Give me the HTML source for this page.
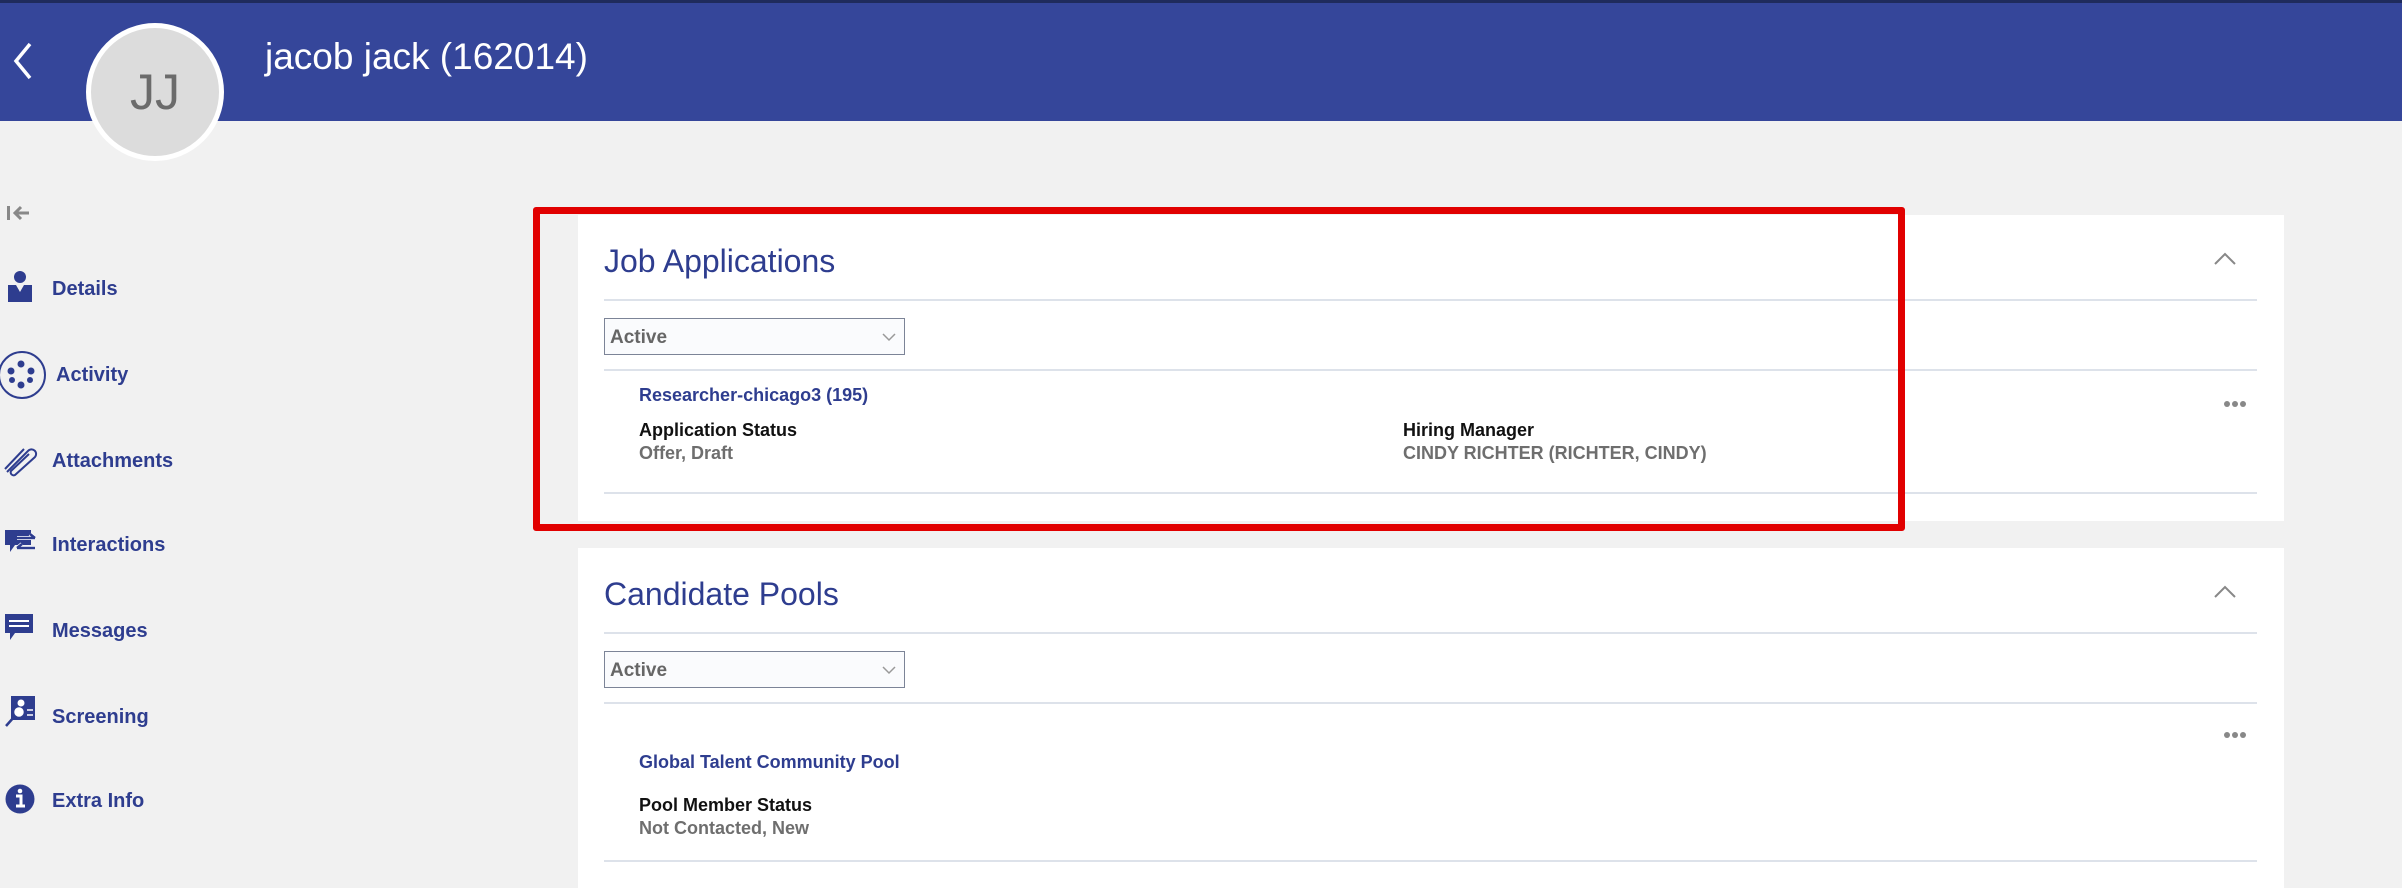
<!DOCTYPE html>
<html><head><meta charset="utf-8">
<style>
*{margin:0;padding:0;box-sizing:border-box}
body{width:2402px;height:882px;background:#f1f1f1;font-family:"Liberation Sans",sans-serif;position:relative;overflow:hidden}
.hdr{position:absolute;left:0;top:0;width:2402px;height:121px;background:#35469a;border-top:3px solid #1f2b5c}
.av{position:absolute;left:86px;top:23px;width:138px;height:138px;border-radius:50%;background:#dcdcdc;border:5px solid #fff;color:#6b6b6b;font-size:50px;text-align:center;line-height:128px}
.ttl{position:absolute;left:265px;top:36px;color:#fff;font-size:37px}
.nav{position:absolute;left:52px;color:#2e3d8f;font-weight:bold;font-size:20px}
.ic{position:absolute}
.card{position:absolute;left:578px;width:1706px;background:#fff}
.h{position:absolute;left:26px;color:#2e3d8f;font-size:32px}
.dv{position:absolute;left:26px;width:1653px;height:2px;background:#dde2ea}
.sel{position:absolute;left:26px;width:301px;height:37px;border:1px solid #7c8497;background:#fafbfd;font-size:19px;color:#666;font-weight:bold;padding:8px 5px}
.lnk{position:absolute;left:61px;color:#2e3d8f;font-weight:bold;font-size:18px}
.lb{position:absolute;color:#111;font-size:18px;font-weight:bold}
.vl{position:absolute;color:#6e6e6e;font-size:18px;font-weight:bold}
.dots{position:absolute;left:1646px;font-size:0}
.dots i{display:inline-block;width:6px;height:6px;border-radius:50%;background:#888;margin-right:2px}
</style></head><body>
<div class="hdr"></div>
<svg class="ic" style="left:10px;top:40px" width="26" height="42"><path d="M20 4 L6 21 L20 38" stroke="#fff" stroke-width="3.5" fill="none"/></svg>
<div class="av">JJ</div>
<div class="ttl">jacob jack (162014)</div>

<svg class="ic" style="left:6px;top:203px" width="26" height="20"><rect x="1" y="3" width="3" height="14" fill="#888"/><path d="M23 10 H9 M15 4 L9 10 L15 16" stroke="#888" stroke-width="3" fill="none"/></svg>
<svg class="ic" style="left:8px;top:271px" width="24" height="32"><circle cx="12" cy="6" r="6" fill="#2e3d8f"/><path d="M0 14 L8 14 L12 21 L16 14 L24 14 V31 H0Z" fill="#2e3d8f"/></svg>
<div class="nav" style="top:278px">Details</div>
<svg class="ic" style="left:0;top:349px" width="50" height="52"><circle cx="22" cy="26" r="23" stroke="#2e3d8f" stroke-width="2" fill="none"/><circle cx="21" cy="15" r="3.5" fill="#2e3d8f"/><circle cx="11" cy="22" r="3.5" fill="#2e3d8f"/><circle cx="31" cy="22" r="3.5" fill="#2e3d8f"/><circle cx="12" cy="31" r="3" fill="#2e3d8f"/><circle cx="30" cy="31" r="3" fill="#2e3d8f"/><circle cx="21" cy="36" r="3.5" fill="#2e3d8f"/></svg>
<div class="nav" style="top:364px;left:56px">Activity</div>
<svg class="ic" style="left:4px;top:447px" width="34" height="30"><path d="M3 25 L24 4 A4.5 4.5 0 0 1 31 10 L11 28 A3 3 0 0 1 7 24 L25 7" stroke="#2e3d8f" stroke-width="2" fill="none"/><path d="M1 22 L20 2" stroke="#2e3d8f" stroke-width="2"/></svg>
<div class="nav" style="top:450px">Attachments</div>
<svg class="ic" style="left:5px;top:530px" width="32" height="25"><path d="M0 0 H26 V15 H10 L5 22 V15 H0Z" fill="#2e3d8f"/><path d="M12 8 H30 M25 4 L30 8 M12 18 H30 M17 14 L12 18" stroke="#fff" stroke-width="4" fill="none"/><path d="M12 8 H30 M25 4 L30 8 M12 18 H30 M17 14 L12 18" stroke="#2e3d8f" stroke-width="2.5" fill="none"/></svg>
<div class="nav" style="top:534px">Interactions</div>
<svg class="ic" style="left:5px;top:614px" width="29" height="28"><path d="M0 0 H28 V19 H10 L5 26 V19 H0Z" fill="#2e3d8f"/><path d="M4 7 H24 M4 12 H24" stroke="#fff" stroke-width="2"/></svg>
<div class="nav" style="top:620px">Messages</div>
<svg class="ic" style="left:4px;top:696px" width="32" height="32"><rect x="7" y="0" width="24" height="24" fill="#2e3d8f"/><circle cx="15" cy="16" r="6" fill="#fff" stroke="#2e3d8f" stroke-width="2.5"/><path d="M10 21 L2 30" stroke="#2e3d8f" stroke-width="2.5"/><circle cx="17" cy="7" r="3.5" fill="#fff"/><path d="M23 14 H29 M23 19 H29" stroke="#fff" stroke-width="1.5"/></svg>
<div class="nav" style="top:706px">Screening</div>
<svg class="ic" style="left:5px;top:784px" width="30" height="30"><circle cx="15" cy="15" r="14.5" fill="#2e3d8f"/><path d="M11 12 H16 V22 M11 22 H20" stroke="#fff" stroke-width="3" fill="none"/><circle cx="15" cy="7" r="2.3" fill="#fff"/></svg>
<div class="nav" style="top:790px">Extra Info</div>

<div class="card" style="top:215px;height:306px">
 <div class="h" style="top:28px">Job Applications</div>
 <svg style="position:absolute;left:1635px;top:36px" width="24" height="16"><path d="M2 13 L12 3 L22 13" stroke="#888" stroke-width="2" fill="none"/></svg>
 <div class="dv" style="top:84px"></div>
 <div class="sel" style="top:103px">Active<svg style="position:absolute;right:8px;top:13px" width="14" height="10"><path d="M1 2 L7 8 L13 2" stroke="#999" stroke-width="1.5" fill="none"/></svg></div>
 <div class="dv" style="top:154px"></div>
 <div class="lnk" style="top:170px">Researcher-chicago3 (195)</div>
 <div class="dots" style="top:186px"><i></i><i></i><i></i></div>
 <div class="lb" style="left:61px;top:205px">Application Status</div>
 <div class="vl" style="left:61px;top:228px">Offer, Draft</div>
 <div class="lb" style="left:825px;top:205px">Hiring Manager</div>
 <div class="vl" style="left:825px;top:228px">CINDY RICHTER (RICHTER, CINDY)</div>
 <div class="dv" style="top:277px"></div>
</div>
<div style="position:absolute;left:533px;top:207px;width:1372px;height:324px;border:7px solid #e10000;border-radius:3px"></div>

<div class="card" style="top:548px;height:340px">
 <div class="h" style="top:28px">Candidate Pools</div>
 <svg style="position:absolute;left:1635px;top:36px" width="24" height="16"><path d="M2 13 L12 3 L22 13" stroke="#888" stroke-width="2" fill="none"/></svg>
 <div class="dv" style="top:84px"></div>
 <div class="sel" style="top:103px">Active<svg style="position:absolute;right:8px;top:13px" width="14" height="10"><path d="M1 2 L7 8 L13 2" stroke="#999" stroke-width="1.5" fill="none"/></svg></div>
 <div class="dv" style="top:154px"></div>
 <div class="dots" style="top:184px"><i></i><i></i><i></i></div>
 <div class="lnk" style="top:204px">Global Talent Community Pool</div>
 <div class="lb" style="left:61px;top:247px">Pool Member Status</div>
 <div class="vl" style="left:61px;top:270px">Not Contacted, New</div>
 <div class="dv" style="top:312px"></div>
</div>
</body></html>
